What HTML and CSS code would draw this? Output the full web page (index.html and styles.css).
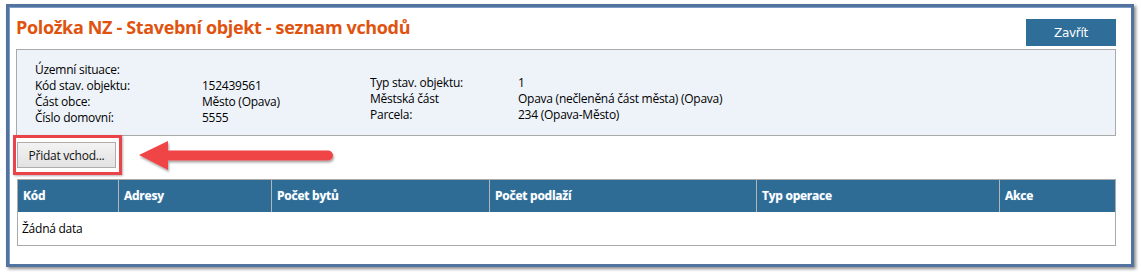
FILE: index.html
```html
<!DOCTYPE html>
<html lang="cs">
<head>
<meta charset="utf-8">
<title>Položka NZ - Stavební objekt - seznam vchodů</title>
<link rel="stylesheet" href="styles.css">
</head>
<body>
<div class="frame">
  <div class="header">
    <h1 class="title">Položka NZ - Stavební objekt - seznam vchodů</h1>
    <button class="btn-close">Zavřít</button>
  </div>
  <div class="info">
    <div class="info-col">
      <div class="info-row"><span class="lbl">Územní situace:</span><span class="val"></span></div>
      <div class="info-row"><span class="lbl">Kód stav. objektu:</span><span class="val">152439561</span></div>
      <div class="info-row"><span class="lbl">Část obce:</span><span class="val">Město (Opava)</span></div>
      <div class="info-row"><span class="lbl">Číslo domovní:</span><span class="val">5555</span></div>
    </div>
    <div class="info-col info-col-right">
      <div class="info-row"><span class="lbl">Typ stav. objektu:</span><span class="val">1</span></div>
      <div class="info-row"><span class="lbl">Městská část</span><span class="val">Opava (nečleněná část města) (Opava)</span></div>
      <div class="info-row"><span class="lbl">Parcela:</span><span class="val">234 (Opava-Město)</span></div>
    </div>
  </div>
  <div class="actions">
    <button class="btn-add">Přidat vchod...</button>
    <div class="highlight"></div>
    <svg class="arrow" width="210" height="45" viewBox="0 0 210 45">
      <defs>
        <filter id="sh" x="-10%" y="-30%" width="120%" height="160%">
          <feDropShadow dx="1" dy="2" stdDeviation="1.2" flood-color="#000" flood-opacity="0.35"/>
        </filter>
      </defs>
      <g filter="url(#sh)" fill="#f04446">
        <polygon points="9,20 38,6 38,35"/>
        <path d="M36 15.5 H198 a5 5 0 0 1 0 10 H36 Z"/>
      </g>
    </svg>
  </div>
  <table class="grid">
    <colgroup>
      <col style="width:101px"><col style="width:153px"><col style="width:218px"><col style="width:267px"><col style="width:243px"><col style="width:116px">
    </colgroup>
    <thead>
      <tr><th>Kód</th><th>Adresy</th><th>Počet bytů</th><th>Počet podlaží</th><th>Typ operace</th><th>Akce</th></tr>
    </thead>
    <tbody>
      <tr><td colspan="6">Žádná data</td></tr>
    </tbody>
  </table>
</div>
</body>
</html>
```

FILE: styles.css
```css
* { box-sizing: border-box; }
html, body { margin: 0; padding: 0; background: #fff; }
body {
  font-family: "Open Sans", "Noto Sans", sans-serif;
  font-size: 12px;
  letter-spacing: -0.25px;
  color: #000;
  width: 1141px;
  height: 275px;
  overflow: hidden;
}
.frame {
  margin: 4px 0 0 6px;
  width: 1128px;
  height: 263px;
  border: 3px solid #52739f;
  box-shadow: 2px 2px 3px rgba(0,0,0,0.45), inset 1px 1px 0 #7f9cc4;
  padding: 8px 15px 0 7px;
  background: #fff;
}
.header {
  display: flex;
  justify-content: space-between;
  align-items: flex-start;
  height: 31px;
}
.title {
  margin: 0;
  font-size: 18px;
  line-height: 24px;
  font-weight: 700;
  color: #e0530f;
  letter-spacing: -0.35px;
}
.btn-close {
  margin-top: 4px;
  width: 90px;
  height: 27px;
  border: 0;
  background: #2e6e99;
  color: #fff;
  font-family: "DejaVu Sans", sans-serif;
  font-size: 12px;
  letter-spacing: -0.3px;
  padding: 0;
}
.info {
  margin-top: 3px;
  height: 87px;
  border: 1px solid #aaa;
  background: #eef3fa;
  display: flex;
  padding: 12px 0 0 18px;
}
.info-col { width: 335px; flex-shrink: 0; }
.info-col-right { padding-top: 13px; flex: 1; }
.info-row {
  display: flex;
  height: 16px;
  line-height: 16px;
  white-space: nowrap;
}
.lbl { width: 167px; flex-shrink: 0; }
.info-col-right .lbl { width: 148px; }
.actions {
  position: relative;
  padding: 6px 0 11px 1px;
  height: 43px;
}
.btn-add {
  display: block;
  width: 99px;
  height: 26px;
  border: 1px solid #adadad;
  background: linear-gradient(#f3f3f3, #e2e2e2);
  font-family: "Open Sans", "Noto Sans", sans-serif;
  font-size: 12px;
  letter-spacing: -0.25px;
  color: #111;
  padding: 0;
}
.highlight {
  position: absolute;
  left: -3px;
  top: -1px;
  width: 109px;
  height: 40px;
  border: 3px solid #ea4448;
  box-shadow: 1px 1px 2px rgba(0,0,0,0.3);
}
.arrow {
  position: absolute;
  left: 114px;
  top: -1px;
}
.grid {
  margin-left: 1px;
  width: 1098px;
  border-collapse: collapse;
  table-layout: fixed;
  border: 1px solid #aaa;
}
.grid th {
  background: #2e6c96;
  color: #fff;
  font-weight: 700;
  text-align: left;
  height: 32px;
  padding: 0 5px;
  border-left: 1px solid #b5b5b5;
  border-top: 1px solid #aaa;
  text-shadow: 0 0 1px rgba(180,220,255,0.6);
}
.grid th:first-child { border-left: 0; }
.grid td {
  height: 34px;
  padding: 0 4px;
  border-bottom: 1px solid #aaa;
}
```
